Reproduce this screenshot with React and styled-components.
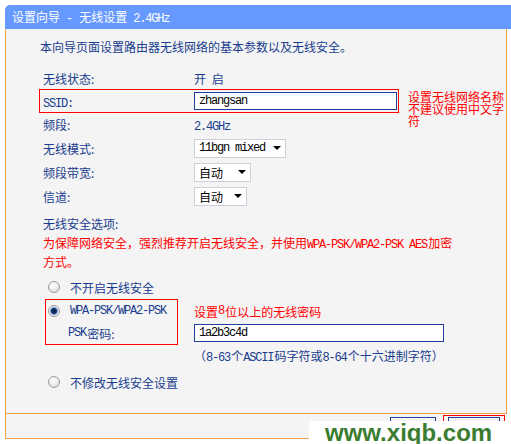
import React from 'react';
import styled, { createGlobalStyle } from 'styled-components';

const BLUE = '#183c8e';
const ORANGE = '#f5a048';
const RED = '#ff0000';

const GlobalStyle = createGlobalStyle`
  html, body {
    margin: 0;
    padding: 0;
    background: #ffffff;
    overflow: hidden;
  }
  body {
    font-family: "Noto Sans CJK SC", "DejaVu Sans", sans-serif;
    font-size: 12px;
  }
`;

const Page = styled.div`
  position: relative;
  width: 511px;
  height: 444px;
  padding: 5px 0 0 5px;
  box-sizing: border-box;
  overflow: hidden;
`;

// half-width latin text, like the router's bitmap font
const Latin = styled.span`
  font-family: "Liberation Mono", "DejaVu Sans Mono", monospace;
  font-size: 12px;
  line-height: 1;
  letter-spacing: -1.2px;
  padding-right: 1.2px;
`;

const TitleBar = styled.div`
  width: 506px;
  height: 24px;
  box-sizing: border-box;
  padding-left: 7px;
  background: #6699ff;
  border-top-left-radius: 5px;
  color: #ffffff;
  line-height: 24px;
  white-space: pre;
`;

const Body = styled.div`
  width: 502px;
  height: 384px;
  box-sizing: border-box;
  padding: 9px 0 0 33px;
  background: #f4f4f4;
  border-left: 1px solid ${ORANGE};
  border-right: 1px solid ${ORANGE};
  color: ${BLUE};
`;

const Intro = styled.div`
  margin-left: 1px;
  line-height: 18px;
`;

const Row = styled.div`
  display: flex;
  align-items: center;
  height: ${p => p.$h || 24}px;
  margin-top: ${p => p.$top || 0}px;
  padding-left: 4px;
`;

const Label = styled.div`
  width: 151px;
  flex-shrink: 0;
  white-space: pre;
`;

const Value = styled.div`
  word-spacing: 3px;
`;

const SsidRow = styled.div`
  display: flex;
  align-items: flex-start;
  height: 24px;
`;

const SsidBox = styled.div`
  display: flex;
  align-items: center;
  width: 360px;
  height: 24px;
  box-sizing: border-box;
  padding-left: 3px;
  border: 1px solid ${RED};
`;

const Note = styled.div`
  width: 97px;
  margin: 2px 0 0 9px;
  color: ${RED};
  line-height: 12px;
`;

const TextInput = styled.input`
  width: ${p => p.$w}px;
  height: 18px;
  box-sizing: border-box;
  margin: 0;
  padding: 0 4px;
  border: 1px solid #1f3f9f;
  background: #ffffff;
  color: #000000;
  font-family: "Liberation Mono", "DejaVu Sans Mono", monospace;
  font-size: 12px;
  letter-spacing: -1.2px;
  outline: none;
`;

const Select = styled.div`
  display: flex;
  align-items: center;
  justify-content: space-between;
  width: ${p => p.$w}px;
  height: 19px;
  box-sizing: border-box;
  padding: 0 4px 0 4px;
  border: 1px solid #cbd0da;
  background: #ffffff;
  color: #000000;
`;

const Caret = () => (
  <svg width="8" height="4" viewBox="0 0 8 4">
    <path d="M0 0 H8 L4 4 Z" fill="#000" />
  </svg>
);

const Heading = styled.div`
  margin-top: 6px;
  padding-left: 4px;
  line-height: 19px;
`;

const Warning = styled.div`
  width: 415px;
  padding-left: 4px;
  color: ${RED};
  line-height: 19px;
`;

const RadioRow = styled.div`
  display: flex;
  align-items: center;
  gap: 10px;
  height: 22px;
  margin-top: ${p => p.$top || 0}px;
  padding-left: ${p => p.$pad ?? 9}px;
`;

const Radio = styled.span`
  width: 12px;
  height: 12px;
  box-sizing: border-box;
  border-radius: 50%;
  border: 1px solid #9c9c9c;
  background: ${p => p.$checked
    ? 'radial-gradient(circle, #0c2656 0, #0c2656 2.2px, #4f7ec4 3.3px, #e9e9e9 4.3px, #fafafa 6px)'
    : 'radial-gradient(circle at 40% 35%, #ffffff 0, #f0f0f0 40%, #d4d4d4 100%)'};
`;

const WpaSection = styled.div`
  display: flex;
  margin-top: 1px;
`;

const WpaBox = styled.div`
  width: 133px;
  height: 46px;
  box-sizing: border-box;
  margin-left: 6px;
  padding-left: 2px;
  border: 1px solid ${RED};
`;

const SubLabel = styled.div`
  display: flex;
  align-items: center;
  height: 22px;
  padding-left: 20px;
`;

const WpaRight = styled.div`
  margin-left: 16px;
  padding-top: 1px;
`;

const RightLine = styled.div`
  display: flex;
  align-items: center;
  height: 22px;
  color: ${p => p.$red ? RED : 'inherit'};
`;

const Hint = styled.div`
  margin: 1px 0 0 155px;
  line-height: 20px;
`;

const Footer = styled.div`
  display: flex;
  justify-content: flex-end;
  align-items: flex-start;
  width: 502px;
  height: 26px;
  box-sizing: border-box;
  padding: 1px 2px 0 0;
  border-left: 1px solid ${ORANGE};
  border-top: 1px solid ${ORANGE};
  border-bottom: 1px solid ${ORANGE};
  background: #f4f4f4;
  overflow: hidden;
`;

const Button = styled.button`
  width: ${p => p.$w}px;
  height: 20px;
  margin: ${p => p.$mt || 0}px ${p => p.$mr || 0}px 0 0;
  padding: 0;
  border: 1px solid #23449f;
  background: #f4f4f4;
  color: ${BLUE};
  font-family: inherit;
  font-size: 12px;
`;

const FocusRing = styled.div`
  padding: 1px 4px;
  border: 1px solid ${RED};
`;

const Watermark = styled.div`
  position: absolute;
  left: 309px;
  top: 421px;
  width: 202px;
  height: 23px;
  padding-left: 16px;
  box-sizing: border-box;
  overflow: hidden;
  background: #ffffff;
  color: #3b7c30;
  font-family: "Liberation Sans", Arial, sans-serif;
  font-weight: bold;
  font-size: 24px;
  line-height: 24px;
`;

export default function App() {
  return (
    <Page>
      <GlobalStyle />
      <TitleBar>设置向导<Latin> - </Latin>无线设置<Latin> 2.4GHz</Latin></TitleBar>
      <Body>
        <Intro>本向导页面设置路由器无线网络的基本参数以及无线安全。</Intro>

        <Row $h={21} $top={12}>
          <Label>无线状态:</Label>
          <Value>开 启</Value>
        </Row>

        <SsidRow>
          <SsidBox>
            <Label><Latin>SSID:</Latin></Label>
            <TextInput $w={203} value="zhangsan" readOnly />
          </SsidBox>
          <Note>设置无线网络名称不建议使用中文字符</Note>
        </SsidRow>

        <Row $h={23}>
          <Label>频段:</Label>
          <Value><Latin>2.4GHz</Latin></Value>
        </Row>

        <Row>
          <Label>无线模式:</Label>
          <Select $w={92}><Latin>11bgn mixed</Latin><Caret /></Select>
        </Row>

        <Row>
          <Label>频段带宽:</Label>
          <Select $w={57}>自动<Caret /></Select>
        </Row>

        <Row>
          <Label>信道:</Label>
          <Select $w={53}>自动<Caret /></Select>
        </Row>

        <Heading>无线安全选项:</Heading>
        <Warning>
          为保障网络安全，强烈推荐开启无线安全，并使用<Latin>WPA-PSK/WPA2-PSK AES</Latin>加密方式。
        </Warning>

        <RadioRow $top={5}>
          <Radio />
          <span>不开启无线安全</span>
        </RadioRow>

        <WpaSection>
          <WpaBox>
            <RadioRow $pad={0}>
              <Radio $checked />
              <Latin>WPA-PSK/WPA2-PSK</Latin>
            </RadioRow>
            <SubLabel><Latin>PSK</Latin>密码:</SubLabel>
          </WpaBox>
          <WpaRight>
            <RightLine $red>设置<Latin>8</Latin>位以上的无线密码</RightLine>
            <RightLine><TextInput $w={250} value="1a2b3c4d" readOnly /></RightLine>
          </WpaRight>
        </WpaSection>

        <Hint>（<Latin>8-63</Latin>个<Latin>ASCII</Latin>码字符或<Latin>8-64</Latin>个十六进制字符）</Hint>

        <RadioRow $top={5}>
          <Radio />
          <span>不修改无线安全设置</span>
        </RadioRow>
      </Body>

      <Footer>
        <Button $w={46} $mt={2} $mr={7}>上一步</Button>
        <FocusRing>
          <Button $w={52}>下一步</Button>
        </FocusRing>
      </Footer>

      <Watermark>www.xiqb.com</Watermark>
    </Page>
  );
}
